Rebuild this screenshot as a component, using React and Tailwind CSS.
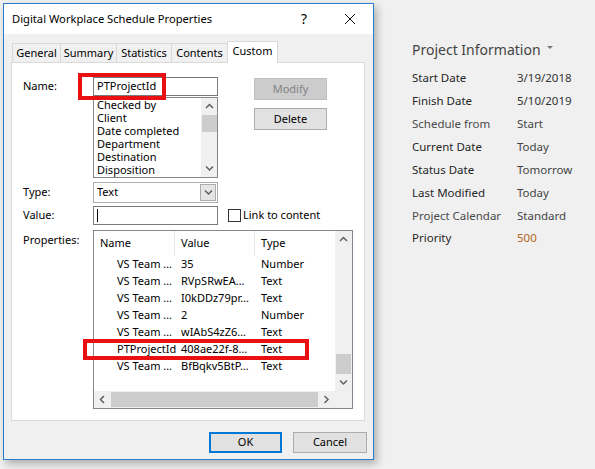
import React from 'react';

const Chevron = ({ dir = 'up', className = '' }) => {
  const horiz = dir === 'left' || dir === 'right';
  const pts = {
    up: '1,5 4.5,1.5 8,5',
    down: '1,1.5 4.5,5 8,1.5',
    left: '5,1 1.5,4.5 5,8',
    right: '1.5,1 5,4.5 1.5,8',
  }[dir];
  return (
    <svg
      width={horiz ? 7 : 9}
      height={horiz ? 9 : 7}
      viewBox={horiz ? '0 0 7 9' : '0 0 9 7'}
      className={className}
    >
      <polyline points={pts} fill="none" stroke="#606060" strokeWidth="1.5" />
    </svg>
  );
};

const tabs = [
  { label: 'General', w: 'w-[49px]' },
  { label: 'Summary', w: 'w-[57px]' },
  { label: 'Statistics', w: 'w-[56px]' },
  { label: 'Contents', w: 'w-[57px]' },
];

const names = ['Checked by', 'Client', 'Date completed', 'Department', 'Destination', 'Disposition'];

const props = [
  ['VS Team …', '35', 'Number'],
  ['VS Team …', 'RVpSRwEA…', 'Text'],
  ['VS Team …', 'I0kDDz79pr…', 'Text'],
  ['VS Team …', '2', 'Number'],
  ['VS Team …', 'wIAbS4zZ6…', 'Text'],
  ['PTProjectId', '408ae22f-8…', 'Text'],
  ['VS Team …', 'BfBqkv5BtP…', 'Text'],
];

const info = [
  ['Start Date', '3/19/2018', 'text-[#262626]', 'text-[#333]'],
  ['Finish Date', '5/10/2019', 'text-[#262626]', 'text-[#333]'],
  ['Schedule from', 'Start', 'text-[#4a4a4a]', 'text-[#444]'],
  ['Current Date', 'Today', 'text-[#262626]', 'text-[#444]'],
  ['Status Date', 'Tomorrow', 'text-[#262626]', 'text-[#444]'],
  ['Last Modified', 'Today', 'text-[#262626]', 'text-[#444]'],
  ['Project Calendar', 'Standard', 'text-[#4a4a4a]', 'text-[#444]'],
  ['Priority', '500', 'text-[#262626]', 'text-[#b5651d]'],
];

export default function App() {
  return (
    <div className="flex h-[469px] w-[595px] overflow-hidden bg-[#f0f0f0] font-['Noto_Sans',sans-serif] text-[11px] text-black">
      {/* Dialog */}
      <div className="relative ml-[3px] mt-[3px] flex h-[457px] w-[371px] shrink-0 flex-col border border-[#2b7cd3] bg-[#f0f0f0] shadow-[3px_4px_8px_rgba(0,0,0,0.28)]">
        {/* Title bar */}
        <div className="flex h-[30px] items-center bg-white pl-[8px]">
          <span className="text-[11.2px] text-black">Digital Workplace Schedule Properties</span>
          <span className="ml-auto mr-[37px] text-[14px] leading-none">?</span>
          <svg width="12" height="12" viewBox="0 0 12 12" className="mr-[17px]">
            <path d="M1 1 L11 11 M11 1 L1 11" stroke="#111" strokeWidth="1" />
          </svg>
        </div>

        {/* Tabs */}
        <div className="relative z-10 ml-[8px] mt-[7px] flex h-[21px] items-end">
          {tabs.map((t) => (
            <div
              key={t.label}
              className={`-mr-px flex h-[19px] ${t.w} items-center justify-center border border-b-0 border-[#d9d9d9] bg-[#f0f0f0]`}
            >
              {t.label}
            </div>
          ))}
          <div className="-mb-px flex h-[22px] w-[51px] items-start justify-center border border-b-0 border-[#d9d9d9] bg-white pt-[1px]">
            Custom
          </div>
        </div>

        {/* Panel */}
        <div className="ml-[7px] flex h-[359px] w-[354px] flex-col border border-[#d9d9d9] bg-white pt-[14px]">
          <div className="flex">
            <div className="w-[81px] pl-[11px]">
              <div className="flex h-[19px] items-center">Name:</div>
            </div>
            <div className="w-[125px]">
              <div className="relative flex h-[19px] items-center border border-[#7a7a7a] pl-[3px]">
                PTProjectId
                <div className="absolute left-[-16px] top-[-5px] h-[27px] w-[88px] border-[4px] border-[#e81010]" />
              </div>
              <div className="mt-px flex h-[81px] border border-[#828790]">
                <div className="flex-1 pl-[3px]">
                  {names.map((n) => (
                    <div key={n} className="h-[13px] whitespace-nowrap leading-[13px]">
                      {n}
                    </div>
                  ))}
                </div>
                <div className="flex w-[16px] flex-col items-center bg-[#f0f0f0]">
                  <div className="flex h-[17px] items-center">
                    <Chevron dir="up" />
                  </div>
                  <div className="h-[17px] w-[15px] bg-[#cdcdcd]" />
                  <div className="mt-auto flex h-[17px] items-center">
                    <Chevron dir="down" />
                  </div>
                </div>
              </div>
            </div>
            <div className="ml-[36px] w-[73px] pt-px">
              <div className="flex h-[22px] items-center justify-center border border-[#bfbfbf] bg-[#cccccc] text-[#838383]">
                Modify
              </div>
              <div className="mt-[8px] flex h-[22px] items-center justify-center border border-[#adadad] bg-[#e1e1e1]">
                Delete
              </div>
            </div>
          </div>

          {/* Type */}
          <div className="mt-[4px] flex">
            <div className="flex h-[21px] w-[81px] items-center pl-[11px]">Type:</div>
            <div className="flex h-[21px] w-[125px] items-stretch border border-[#adadad] bg-white">
              <div className="flex flex-1 items-center pl-[3px]">Text</div>
              <div className="m-px flex w-[16px] items-center justify-center border border-[#acacac] bg-[#e5e5e5]">
                <Chevron dir="down" />
              </div>
            </div>
          </div>

          {/* Value */}
          <div className="mt-[3px] flex">
            <div className="flex h-[19px] w-[81px] items-center pl-[11px]">Value:</div>
            <div className="flex h-[19px] w-[125px] items-center border border-[#7a7a7a] pl-[3px]">
              <div className="h-[13px] w-px bg-black" />
            </div>
            <div className="ml-[10px] flex items-center">
              <div className="h-[13px] w-[13px] border border-[#333] bg-white" />
              <span className="ml-[2px]">Link to content</span>
            </div>
          </div>

          {/* Properties */}
          <div className="mt-[5px] flex">
            <div className="flex h-[21px] w-[81px] items-center pl-[11px]">Properties:</div>
            <div className="relative flex h-[179px] w-[260px] flex-col border border-[#828790]">
              <div className="flex flex-1">
                <div className="flex flex-1 flex-col overflow-hidden">
                  <div className="flex h-[25px] items-center">
                    <div className="flex h-full w-[81px] items-center border-r border-[#e5e5e5] pl-[6px]">Name</div>
                    <div className="flex h-full w-[80px] items-center border-r border-[#e5e5e5] pl-[6px]">Value</div>
                    <div className="flex h-full flex-1 items-center pl-[6px]">Type</div>
                  </div>
                  {props.map((r, i) => (
                    <div key={i} className="flex h-[17px] items-center whitespace-nowrap">
                      <div className="w-[81px] pl-[23px]">{r[0]}</div>
                      <div className="w-[80px] pl-[6px]">{r[1]}</div>
                      <div className="flex-1 pl-[6px]">{r[2]}</div>
                    </div>
                  ))}
                </div>
                <div className="flex w-[17px] flex-col items-center bg-[#f0f0f0]">
                  <div className="flex h-[17px] items-center">
                    <Chevron dir="up" />
                  </div>
                  <div className="mt-auto h-[20px] w-[15px] bg-[#cdcdcd]" />
                  <div className="flex h-[17px] items-center">
                    <Chevron dir="down" />
                  </div>
                </div>
              </div>
              <div className="flex h-[17px] bg-[#f0f0f0]">
                <div className="flex w-[17px] items-center justify-center">
                  <Chevron dir="left" />
                </div>
                <div className="my-px w-[207px] bg-[#cdcdcd]" />
                <div className="flex w-[17px] items-center justify-center">
                  <Chevron dir="right" />
                </div>
                <div className="flex-1 bg-[#f0f0f0]" />
              </div>
              <div className="absolute left-[-11px] top-[108px] h-[21px] w-[226px] border-[4px] border-[#e81010]" />
            </div>
          </div>
        </div>

        {/* Footer buttons */}
        <div className="mt-[11px] flex justify-end gap-[11px] pr-[6px]">
          <div className="flex h-[21px] w-[73px] items-center justify-center border-2 border-[#0078d7] bg-[#e1e1e1]">
            OK
          </div>
          <div className="flex h-[21px] w-[74px] items-center justify-center border border-[#adadad] bg-[#e1e1e1]">
            Cancel
          </div>
        </div>
      </div>

      {/* Project information */}
      <div className="ml-[38px] pt-[39px]">
        <div className="flex h-[20px] items-center text-[14px] text-[#444]">
          Project Information
          <svg width="6" height="4" viewBox="0 0 6 4" className="ml-[6px] mt-[-2px]">
            <path d="M0 0 L6 0 L3 3 Z" fill="#777" />
          </svg>
        </div>
        <div className="mt-[7px]">
          {info.map(([k, v, kc, vc], i) => (
            <div
              key={k}
              className={`flex items-center text-[11.5px] ${i === 7 ? 'h-[21px]' : 'h-[23px]'}`}
            >
              <div className={`w-[105px] ${kc}`}>{k}</div>
              <div className={vc}>{v}</div>
            </div>
          ))}
        </div>
      </div>
    </div>
  );
}
